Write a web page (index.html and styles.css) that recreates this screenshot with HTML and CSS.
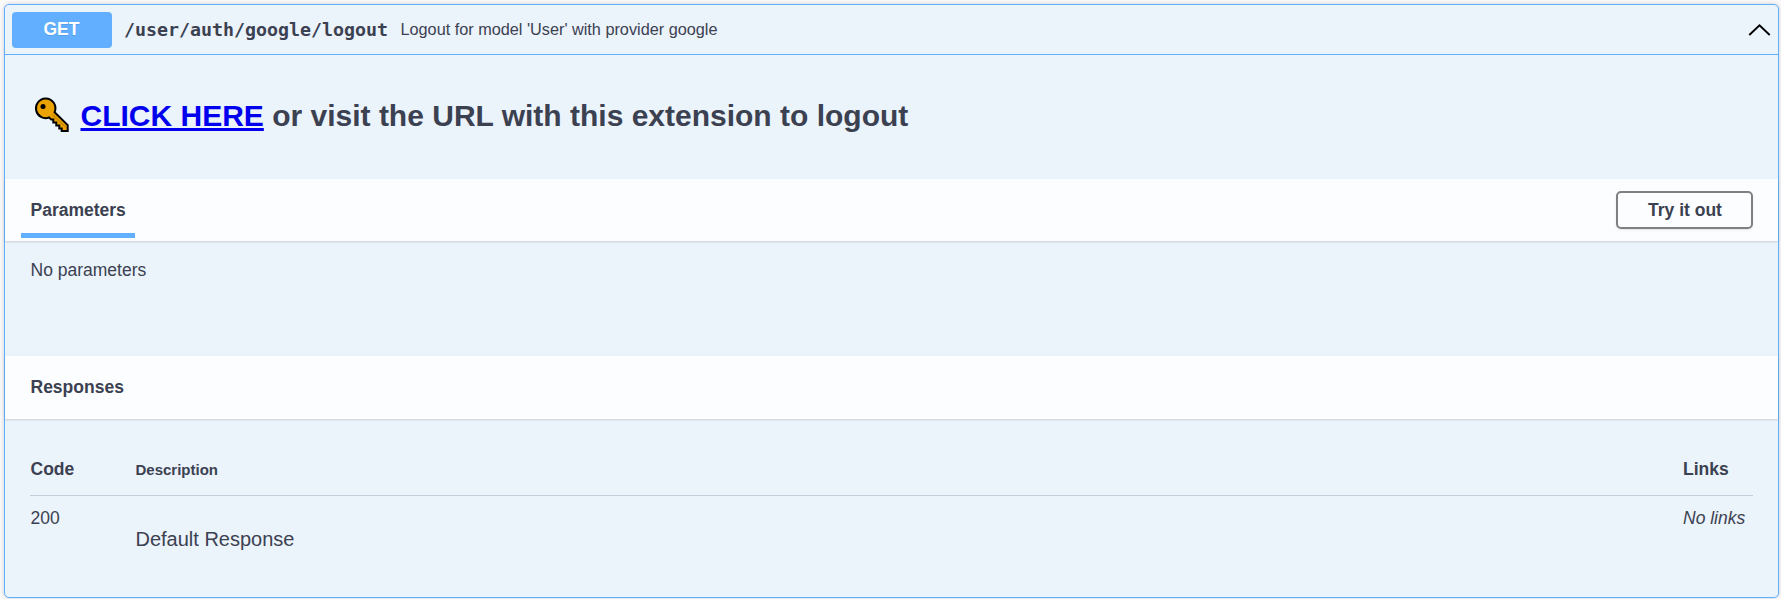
FILE: index.html
```html
<!DOCTYPE html>
<html lang="en">
<head>
<meta charset="utf-8">
<title>API operation</title>
<link rel="stylesheet" href="styles.css">
</head>
<body>
<section class="opblock">
  <header class="summary">
    <span class="method">GET</span>
    <span class="path">/user/auth/google/logout</span>
    <span class="summary-text">Logout for model 'User' with provider google</span>
    <svg class="arrow" width="23" height="14" viewBox="0 0 23 14"><path d="M1.3 12 11.5 2.2 21.7 12" fill="none" stroke="#000" stroke-width="1.9"/></svg>
  </header>
  <div class="description">
    <h1 class="title">
      <svg class="key" width="36" height="36" viewBox="0 0 36 36">
        <path d="M11.3 1.5a9.8 9.8 0 1 0 3.8 19l2.2 2.1h2v3h3v3h3v3h2.4v2.5h6v-6L20.6 15.2A9.8 9.8 0 0 0 11.3 1.5z" fill="#eaa300" stroke="#000" stroke-width="2"/>
        <path d="M18.3 17.5 31.5 30" stroke="#c98900" stroke-width="1.5"/>
        <circle cx="9" cy="9.4" r="2.5"/>
      </svg>
      <span><a class="link" href="#">CLICK HERE</a> or visit the URL with this extension to logout</span>
    </h1>
  </div>
  <div class="section-header">
    <h4 class="tab">Parameters</h4>
    <button class="try">Try it out</button>
  </div>
  <div class="parameters">No parameters</div>
  <div class="section-header responses-header"><h4 class="heading">Responses</h4></div>
  <div class="responses">
    <div class="row head"><span>Code</span><span class="small">Description</span><span>Links</span></div>
    <div class="row"><span>200</span><span class="response-text">Default Response</span><i>No links</i></div>
  </div>
</section>
</body>
</html>
```
FILE: styles.css
```css
* { box-sizing: border-box; }
body {
  margin: 0;
  padding: 4px 2px 0 4px;
  height: 599px;
  overflow: hidden;
  background: #fafafa;
  color: #3b4151;
  font: 17.5px/20px "Liberation Sans", Arial, sans-serif;
}
h1, h4 { margin: 0; }
.opblock {
  height: 594px;
  border: 1px solid #61affe;
  border-radius: 5px;
  background: #ebf3fb;
  box-shadow: 0 0 4px rgba(0, 0, 0, .19);
}
.summary {
  display: flex;
  align-items: center;
  height: 50px;
  padding: 1px 7px 0 7px;
  border-bottom: 1px solid #61affe;
}
.method {
  width: 100px;
  height: 36px;
  padding-right: 1px;
  border-radius: 4px;
  background: #61affe;
  color: #fff;
  font-weight: 700;
  line-height: 35px;
  text-align: center;
  text-shadow: 0 1px 0 rgba(0, 0, 0, .1);
}
.path {
  width: 264px;
  margin: 0 12.5px 0 12px;
  font: 700 18.27px/24px "DejaVu Sans Mono", monospace;
}
.summary-text { flex: 1; padding-bottom: 2px; font-size: 16.25px; line-height: 22px; }
.description { height: 124px; padding: 42px 28px 0 29px; }
.title { display: flex; gap: 10.5px; font-size: 30px; line-height: 37px; }
.key { flex: none; }
.link { color: #00e; }
.section-header {
  display: flex;
  align-items: center;
  justify-content: space-between;
  height: 62px;
  padding: 0 25px 0 16px;
  background: rgba(255, 255, 255, .8);
  box-shadow: 0 1px 2px rgba(0, 0, 0, .15);
}
.tab {
  align-self: flex-end;
  height: 42px;
  margin-bottom: 3px;
  padding: 4px 9.5px 0;
  border-bottom: 5px solid #61affe;
  font-size: 17.5px;
}
.try {
  width: 137px;
  height: 38px;
  padding: 0 0 0 1px;
  border: 2px solid gray;
  border-radius: 5px;
  background: transparent;
  box-shadow: 0 1px 2px rgba(0, 0, 0, .1);
  color: #3b4151;
  font: 700 17.5px/20px "Liberation Sans", Arial, sans-serif;
}
.parameters { height: 115px; padding: 19px 25.5px 0; }
.responses-header { height: 63px; padding: 0 25.5px 2px; }
.heading { font-size: 17.5px; }
.responses { padding: 25px 25px 0 25px; }
.row {
  display: grid;
  grid-template-columns: 105px 1fr 70px;
  align-items: baseline;
  padding: 12px 0 0 .5px;
}
.head { height: 52px; padding-top: 15px; border-bottom: 1px solid #c5cddb; font-weight: 700; }
.small { font-size: 15px; }
.row:not(.head) { align-items: start; }
.response-text { padding-top: 20px; font-size: 20px; line-height: 22px; }
```
